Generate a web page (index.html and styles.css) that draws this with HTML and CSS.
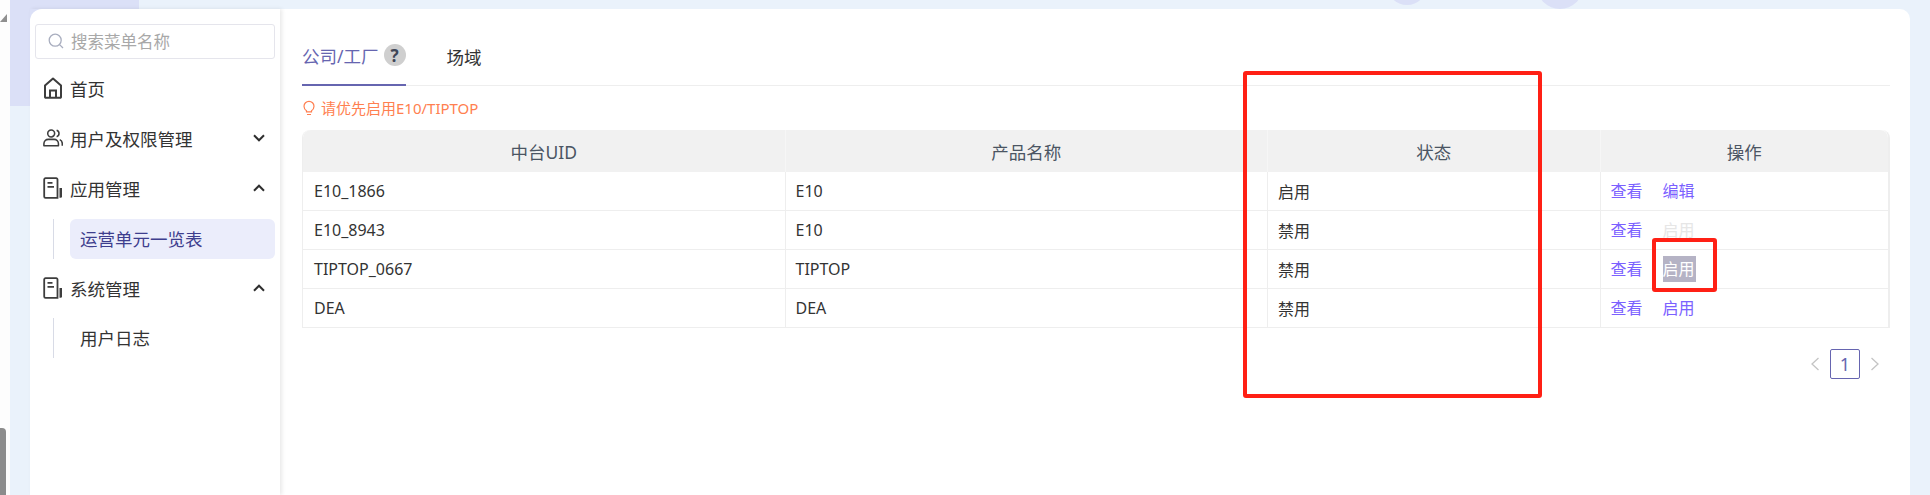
FILE: index.html
```html
<!DOCTYPE html>
<html lang="zh-CN">
<head>
<meta charset="utf-8">
<title>运营单元一览表</title>
<link rel="stylesheet" href="styles.css">
</head>
<body>
<div class="page">
  <div class="edge">
    <span class="edge-tri"></span>
    <span class="edge-scroll"></span>
  </div>
  <div class="shell">
    <span class="blob blob-a"></span>
    <span class="blob blob-b"></span>
    <span class="blob blob-c"></span>
    <div class="card">
      <aside class="side">
        <div class="search">
          <svg class="search-ico" viewBox="0 0 16 16" width="16" height="16"><circle cx="7.2" cy="7.2" r="6" fill="none" stroke="#a9aebf" stroke-width="1.3"/><path d="M11.6 11.6L15 15" stroke="#a9aebf" stroke-width="1.3" fill="none"/></svg>
          <span>搜索菜单名称</span>
        </div>
        <div class="menu">
          <div class="item">
            <svg class="ico" viewBox="0 0 20 22" width="20" height="22"><path d="M2 8.500L10 1.500l8 7V20a.8.8 0 0 1-.8.8H2.800A.8.8 0 0 1 2 20z" fill="none" stroke="#3d3d3d" stroke-width="2" stroke-linejoin="round"/><path d="M7 20.500V13.500H13V20.500" fill="none" stroke="#3d3d3d" stroke-width="2"/></svg>
            <span>首页</span>
          </div>
          <div class="item">
            <svg class="ico" viewBox="0 0 22 20" width="22" height="20"><circle cx="9" cy="5" r="3.800" fill="none" stroke="#3d3d3d" stroke-width="1.700"/><path d="M1 18.500v-2.300c0-2.800 2.200-4.700 4.800-4.700h6.400c2.600 0 4.800 1.900 4.800 4.700v2.300z" fill="none" stroke="#3d3d3d" stroke-width="1.700" stroke-linejoin="round"/><path d="M15 1.500c1.700.5 2.600 1.900 2.600 3.500s-.9 3-2.600 3.500M18.400 11.800c1.800.7 2.800 2.300 2.800 4.200v2.500" fill="none" stroke="#3d3d3d" stroke-width="1.700"/></svg>
            <span>用户及权限管理</span>
            <svg class="caret" viewBox="0 0 12 8" width="12" height="8"><path d="M1 1.300L6 6.300L11 1.300" fill="none" stroke="#2e2e2e" stroke-width="2"/></svg>
          </div>
          <div class="item">
            <svg class="ico" viewBox="0 0 20 22" width="20" height="22"><path d="M14.500 20.800H2.500a1.300 1.300 0 0 1-1.300-1.300V2.500a1.300 1.300 0 0 1 1.300-1.300h10.700a1.300 1.300 0 0 1 1.300 1.300z" fill="none" stroke="#3d3d3d" stroke-width="1.800"/><path d="M4.500 5.800H9.500M4.500 9.800H11" stroke="#3d3d3d" stroke-width="1.800"/><path d="M16.500 11h2.500v8.500a1.300 1.300 0 0 1-1.300 1.300h-1.200z" fill="#3d3d3d"/></svg>
            <span>应用管理</span>
            <svg class="caret" viewBox="0 0 12 8" width="12" height="8"><path d="M1 6.700L6 1.700L11 6.700" fill="none" stroke="#2e2e2e" stroke-width="2"/></svg>
          </div>
          <div class="sub sub-first">
            <div class="sub-item sub-on">运营单元一览表</div>
          </div>
          <div class="item item-next">
            <svg class="ico" viewBox="0 0 20 22" width="20" height="22"><path d="M14.500 20.800H2.500a1.300 1.300 0 0 1-1.300-1.300V2.500a1.300 1.300 0 0 1 1.300-1.300h10.700a1.300 1.300 0 0 1 1.300 1.300z" fill="none" stroke="#3d3d3d" stroke-width="1.800"/><path d="M4.500 5.800H9.500M4.500 9.800H11" stroke="#3d3d3d" stroke-width="1.800"/><path d="M16.500 11h2.500v8.500a1.300 1.300 0 0 1-1.300 1.300h-1.200z" fill="#3d3d3d"/></svg>
            <span>系统管理</span>
            <svg class="caret" viewBox="0 0 12 8" width="12" height="8"><path d="M1 6.700L6 1.700L11 6.700" fill="none" stroke="#2e2e2e" stroke-width="2"/></svg>
          </div>
          <div class="sub">
            <div class="sub-item">用户日志</div>
          </div>
        </div>
      </aside>
      <main class="main">
        <div class="tabs">
          <div class="tab tab-on">公司/工厂<span class="q">?</span></div>
          <div class="tab">场域</div>
        </div>
        <div class="hint">
          <svg viewBox="0 0 12 16" width="12" height="16"><path d="M3.500 10.800C2 9.800 1 8.300 1 6.300a5 5 0 0 1 10 0c0 2-1 3.500-2.500 4.500v1H3.500zM4 14.500h4" fill="none" stroke="#ff7f50" stroke-width="1.200"/></svg>
          <span>请优先启用E10/TIPTOP</span>
        </div>
        <table class="tbl">
          <colgroup><col class="c1"><col class="c2"><col class="c3"><col class="c4"></colgroup>
          <thead>
            <tr><th>中台UID</th><th>产品名称</th><th>状态</th><th>操作</th></tr>
          </thead>
          <tbody>
            <tr><td>E10_1866</td><td>E10</td><td>启用</td><td><a class="act">查看</a><a class="act">编辑</a></td></tr>
            <tr><td>E10_8943</td><td>E10</td><td>禁用</td><td><a class="act">查看</a><a class="act act-off">启用</a></td></tr>
            <tr><td>TIPTOP_0667</td><td>TIPTOP</td><td>禁用</td><td><a class="act">查看</a><a class="act act-sel">启用</a></td></tr>
            <tr><td>DEA</td><td>DEA</td><td>禁用</td><td><a class="act">查看</a><a class="act">启用</a></td></tr>
          </tbody>
        </table>
        <div class="pager">
          <svg viewBox="0 0 10 16" width="10" height="16"><path d="M8.500 2L2 8l6.500 6" fill="none" stroke="#c4c4c4" stroke-width="1.300"/></svg>
          <span class="pg">1</span>
          <svg viewBox="0 0 10 16" width="10" height="16"><path d="M1.500 2L8 8l-6.500 6" fill="none" stroke="#c4c4c4" stroke-width="1.300"/></svg>
        </div>
      </main>
    </div>
    <span class="mark mark-col"></span>
    <span class="mark mark-btn"></span>
  </div>
</div>
</body>
</html>
```

FILE: styles.css
```css
* { box-sizing: border-box; }
html, body { margin: 0; height: 495px; overflow: hidden; background: #fff; }
body { font-family: "Noto Sans", "Noto Sans CJK SC", sans-serif; font-size: 16px; color: #333; }
.page { display: flex; width: 1930px; height: 495px; }
.edge { width: 10px; flex: none; background: #fdfdfd; position: relative; }
.edge-tri { position: absolute; left: 0; top: 14px; width: 0; height: 0; border-bottom: 8px solid #8f8f8f; border-right: 7px solid transparent; transform: scaleX(-1); }
.edge-scroll { position: absolute; left: 0; top: 428px; width: 6px; height: 67px; background: #8c8c8c; border-top-right-radius: 4px; }
.shell { position: relative; flex: 1; background: #eaf2fb; padding: 9px 20px 0 20px; overflow: hidden; }
.blob { position: absolute; background: #dbe0f7; }
.blob-a { left: 0; top: -20px; width: 129px; height: 126px; border-bottom-right-radius: 14px; }
.blob-b { left: 1377px; top: -35px; width: 40px; height: 40px; border-radius: 50%; }
.blob-c { left: 1527px; top: -37px; width: 46px; height: 46px; border-radius: 50%; }
.card { position: relative; display: flex; height: 486px; background: #fff; border-radius: 12px 10px 0 0; }
.side { width: 250px; flex: none; padding: 15px 5px 0; box-shadow: 2px 0 4px rgba(0,0,0,.09); }
.search { display: flex; align-items: center; gap: 7px; height: 35px; padding: 0 0 1px 12px; border: 1px solid #e5e5ec; border-radius: 3px; font-size: 16.500px; color: #a8a8a8; }
.search-ico { flex: none; }
.menu { margin-top: 4px; }
.item { display: flex; align-items: center; height: 50px; padding-left: 8px; font-size: 17.500px; color: #333; }
.item .ico { flex: none; width: 20px; margin-right: 7px; }
.item-next { margin-top: 4px; }
.caret { margin-left: auto; margin-right: 10px; }
.sub { margin: 5px 0 0 18px; padding-left: 17px; position: relative; }
.sub-first { margin-top: 6px; }
.sub::before { content: ""; position: absolute; left: 0; top: 0; bottom: 0; width: 1px; background: #d8dbe6; }
.sub-item { height: 40px; line-height: 40px; padding-left: 10px; font-size: 17.500px; color: #333; border-radius: 6px; }
.sub-on { background: #ebedfb; color: #3e3e8e; }
.main { flex: 1; padding: 0 20px 0 22px; min-width: 0; }
.tabs { display: flex; height: 62px; margin-top: 15px; border-bottom: 1px solid #eee; }
.tab { display: flex; align-items: center; height: 62px; padding-top: 2px; font-size: 17.500px; color: #333; margin-right: 41px; }
.tab-on { color: #6665b0; border-bottom: 2px solid #6665b0; padding-bottom: 0; }
.q { display: inline-flex; align-items: center; justify-content: center; width: 22px; height: 22px; margin-left: 5px; border-radius: 50%; background: #cfcfcf; color: #3f4657; font-size: 17px; font-weight: 700; }
.hint { display: flex; align-items: center; gap: 6px; height: 44px; padding: 0 0 1px 1px; color: #ff7f50; font-size: 15px; }
.tbl { width: 1588px; table-layout: fixed; border-collapse: separate; border-spacing: 0; border-left: 1px solid #eee; border-right: 2px solid #eee; border-radius: 8px 8px 0 0; }
.c1, .c2 { width: 482.500px; }
.c3 { width: 332.500px; }
.tbl th { height: 42px; padding: 0; background: #f1f1f1; font-size: 17.500px; font-weight: 400; color: #4b5563; border-right: 1px solid #f6f6f6; }
.tbl th:first-child { border-top-left-radius: 8px; }
.tbl th:last-child { border-top-right-radius: 8px; border-right: 0; }
.tbl td { height: 39px; padding: 0 0 0 10px; font-size: 16px; color: #333; border-right: 1px solid #eee; border-bottom: 1px solid #eee; }
.tbl td:first-child { padding-left: 11px; }
.tbl td:last-child { padding-left: 10px; border-right: 0; }
.act { display: inline-block; width: 33px; margin-right: 19px; color: #7b61ff; line-height: 26px; white-space: nowrap; }
.act-off { color: #e6e6e6; }
.act-sel { background: #b5b3c5; color: #fff; }
.pager { display: flex; align-items: center; justify-content: flex-end; gap: 10px; margin-top: 21px; padding-right: 10px; }
.pg { display: flex; align-items: center; justify-content: center; width: 30px; height: 30px; border: 1px solid #6665b0; border-radius: 2px; font-size: 18px; color: #6665b0; }
.mark { position: absolute; border: 4px solid #ff2015; border-radius: 3px; }
.mark-col { left: 1233px; top: 71px; width: 299px; height: 327px; }
.mark-btn { left: 1642px; top: 238px; width: 65px; height: 54px; }
```
